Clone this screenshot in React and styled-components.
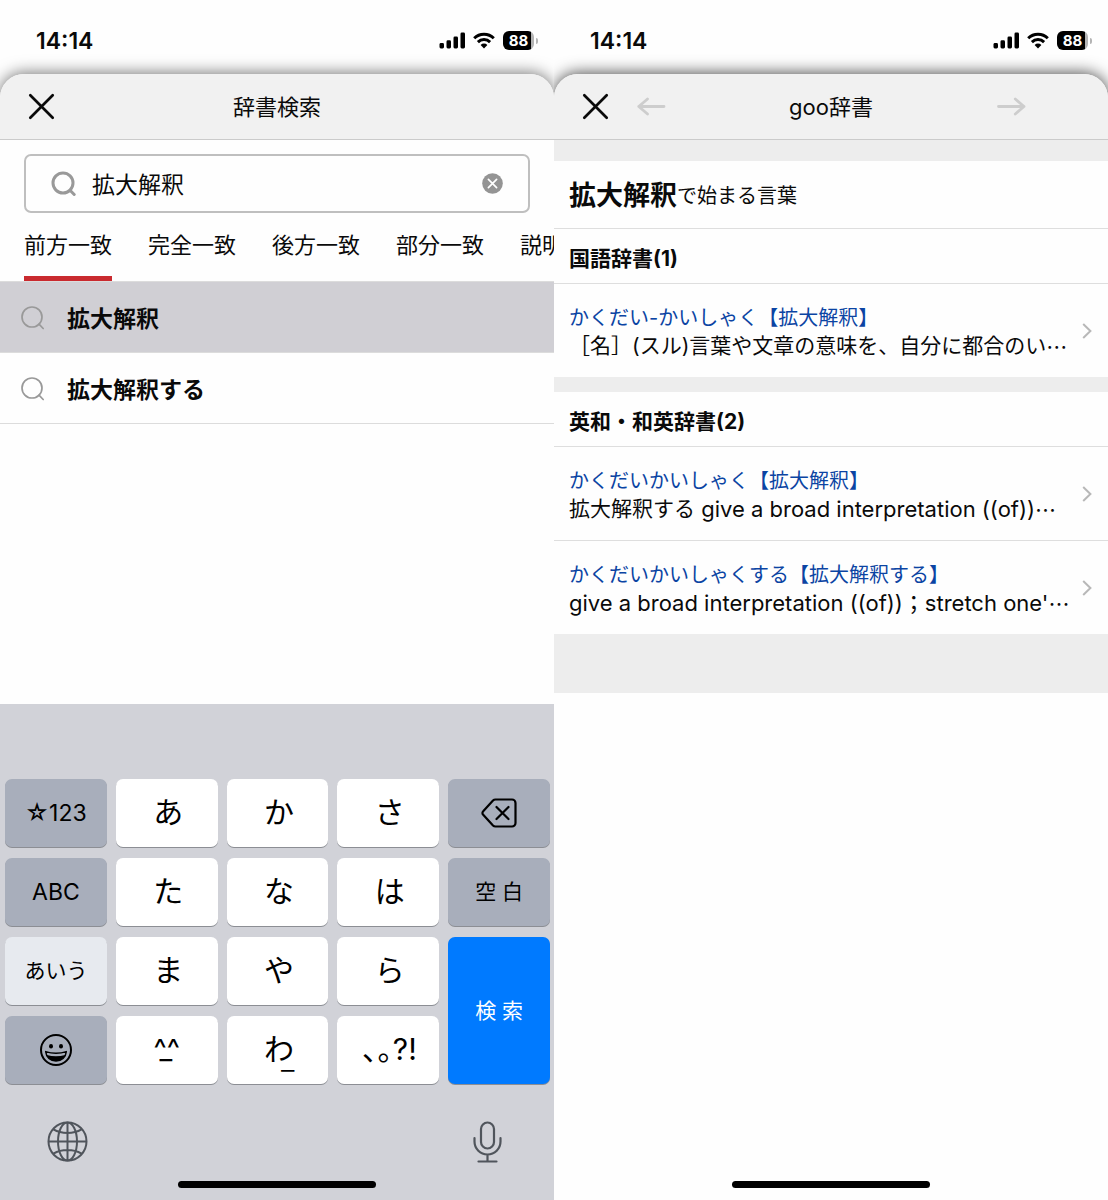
import React, { useState } from "react";
import styled, { createGlobalStyle } from "styled-components";

const GlobalStyle = createGlobalStyle`
  * {
    box-sizing: border-box;
  }

  body {
    margin: 0;
    background-color: #fefefe;
    color: #0a0a0a;
    font-family: "Inter", "Noto Sans CJK JP", sans-serif;
  }

  h1, h2, p, ul {
    margin: 0;
    padding: 0;
  }

  ul {
    list-style: none;
  }

  button, input {
    margin: 0;
    padding: 0;
    border: 0;
    background: none;
    color: inherit;
    font: inherit;
  }

  button {
    cursor: pointer;
  }

  svg {
    display: block;
  }
`;

const Screens = styled.main`
  display: grid;
  grid-template-columns: 1fr 1fr;
  min-height: 100vh;
`;

const Screen = styled.section`
  display: flex;
  flex-direction: column;
  min-width: 0;
  overflow: hidden;
`;

const StatusBar = styled.div`
  display: flex;
  align-items: center;
  justify-content: space-between;
  height: 74px;
  padding: 7px 16px 0 36px;
`;

const Time = styled.span`
  font-size: 23px;
  font-weight: 600;
`;

const StatusIcons = styled.div`
  display: flex;
  align-items: center;
  gap: 8px;
`;

const Battery = styled.div`
  display: flex;
  align-items: center;
  gap: 2px;
`;

const BatteryBody = styled.span`
  width: 31px;
  height: 19px;
  border-radius: 6px;
  background: linear-gradient(to right, #000 28px, #b4b4b4 28px);
  color: #ffffff;
  font-size: 15px;
  font-weight: 700;
  line-height: 19px;
  text-align: center;
`;

const BatteryCap = styled.span`
  width: 2px;
  height: 6px;
  border-radius: 0 2px 2px 0;
  background-color: #b4b4b4;
`;

const Sheet = styled.div`
  display: flex;
  flex: 1;
  flex-direction: column;
  border-radius: 24px 24px 0 0;
  background-color: #fefefe;
  box-shadow: 0 -1px 16px rgba(0, 0, 0, ${(props) => props.$shade});
`;

const Header = styled.header`
  display: grid;
  grid-template-columns: 1fr auto 1fr;
  align-items: center;
  height: 66px;
  border-bottom: 1px solid #cbcbcb;
  border-radius: 24px 24px 0 0;
  background-color: #f1f1f1;
`;

const HeaderLeft = styled.div`
  display: flex;
  align-items: center;
  gap: 28px;
  padding-left: 28px;
`;

const HeaderRight = styled.div`
  display: flex;
  justify-content: flex-end;
  padding-right: 82px;
`;

const Title = styled.h1`
  font-size: 22px;
  font-weight: 400;
  line-height: 32px;
`;

const SearchBox = styled.form`
  display: flex;
  align-items: center;
  height: 59px;
  margin: 14px 24px 0;
  padding: 0 25px;
  border: 2px solid #bfbfbf;
  border-radius: 7px;
`;

const SearchInput = styled.input`
  flex: 1;
  min-width: 0;
  padding: 2px 16px 0;
  font-size: 23px;
  line-height: 36px;
  outline: none;
`;

const Tabs = styled.div`
  display: flex;
  gap: 36px;
  padding-left: 24px;
  border-bottom: 1px solid #dcdcdc;
  overflow: hidden;
`;

const Tab = styled.button`
  flex: none;
  height: 68px;
  border-bottom: 5px solid ${(props) => (props.$active ? "#c92a2f" : "transparent")};
  font-size: 22px;
  line-height: 32px;
  white-space: nowrap;
`;

const Suggestion = styled.button`
  display: flex;
  align-items: center;
  gap: 22px;
  width: 100%;
  height: 71px;
  padding-left: 20px;
  border-bottom: 1px solid #dcdcdc;
  background-color: ${(props) => (props.$active ? "#d0cfd4" : "transparent")};
  font-size: 23px;
  font-weight: 700;
`;

const Keyboard = styled.div`
  margin-top: auto;
  padding-top: 75px;
  background-color: #d1d2d8;
`;

const Keys = styled.div`
  display: grid;
  grid-template-columns: repeat(5, 1fr);
  grid-auto-rows: 68px;
  gap: 11px 9px;
  padding: 0 4px 0 5px;
`;

const keyColors = {
  kana: "#ffffff",
  dark: "#a8aebb",
  light: "#e7eaef",
  blue: "#007aff"
};

const keySizes = {
  kana: "30px",
  dark: "23px",
  light: "21px",
  blue: "21px"
};

const Key = styled.button`
  display: flex;
  align-items: center;
  justify-content: center;
  grid-row: span ${(props) => props.$rows || 1};
  padding: ${(props) => (props.$kind === "kana" ? "0 0 2px 3px" : "0")};
  border-radius: 7px;
  background-color: ${(props) => keyColors[props.$kind]};
  box-shadow: 0 1px 0 #8c8e94;
  color: ${(props) => (props.$kind === "blue" ? "#ffffff" : "#000000")};
  font-size: ${(props) => keySizes[props.$kind]};
  line-height: 44px;
  white-space: nowrap;
`;

const SmallLabel = styled.span`
  font-size: 21px;
`;

const Face = styled.span`
  position: relative;
  padding-right: 3px;
  font-size: 28px;
`;

const FaceMouth = styled.span`
  position: absolute;
  top: 0;
  left: 6px;
`;

const Wa = styled.span`
  position: relative;
`;

const WaBar = styled.span`
  position: absolute;
  top: 10px;
  left: 17px;
  font-weight: 300;
`;

const KeyboardFooter = styled.div`
  display: flex;
  align-items: center;
  justify-content: space-between;
  height: 79px;
  margin-top: 18px;
  padding: 0 52px 0 47px;
  color: #50555c;
`;

const HomeBar = styled.div`
  width: 198px;
  height: 7px;
  margin: 0 auto 12px;
  border-radius: 4px;
  background-color: #000000;
`;

const ResultPage = styled.div`
  padding: 21px 0 59px;
  background-color: #ededed;
`;

const PageTitle = styled.h2`
  display: flex;
  align-items: center;
  height: 68px;
  padding: 2px 0 0 15px;
  border-bottom: 1px solid #dedede;
  background-color: #fefefe;
  font-size: 20px;
  font-weight: 400;
  line-height: 40px;

  strong {
    font-size: 27px;
    font-weight: 700;
  }
`;

const Dictionary = styled.section`
  background-color: #fefefe;

  & + & {
    margin-top: 15px;
  }
`;

const DictionaryName = styled.h2`
  height: 55px;
  padding: 15px 0 0 15px;
  border-bottom: 1px solid #dedede;
  font-size: 21px;
  font-weight: 700;
  line-height: 30px;
`;

const Entry = styled.a`
  display: flex;
  align-items: center;
  justify-content: space-between;
  height: 93px;
  padding: 0 16px 0 15px;
  color: inherit;
  text-decoration: none;
  white-space: nowrap;

  li + li & {
    height: 94px;
    border-top: 1px solid #dedede;
  }
`;

const EntryText = styled.div`
  padding-top: 2px;
`;

const Word = styled.p`
  color: #0b44a3;
  font-size: 20px;
  line-height: 28px;
`;

const Meaning = styled.p`
  display: flex;
  align-items: center;
  height: 28px;
  font-size: 21px;
  line-height: 28px;
`;

const English = styled.span`
  font-size: 22px;
  white-space: pre;
`;

const Ellipsis = styled.span`
  font-family: "Noto Sans CJK JP", sans-serif;
`;

const Footer = styled.footer`
  margin-top: auto;
`;

const CloseIcon = () => (
  <svg width="27" height="27" viewBox="0 0 27 27" fill="none" stroke="#0a0a0a" strokeWidth="2.7" strokeLinecap="round">
    <path d="M2.3 2.3l22.4 22.4M24.7 2.3L2.3 24.7" />
  </svg>
);

const BackIcon = () => (
  <svg width="30" height="20" viewBox="0 0 30 20" fill="none" stroke="#cdcdcd" strokeWidth="2.8" strokeLinecap="round" strokeLinejoin="round">
    <path d="M27 9.5H1.8M10.5 2L1.8 9.5l8.7 7.5" />
  </svg>
);

const ForwardIcon = () => (
  <svg width="30" height="20" viewBox="0 0 30 20" fill="none" stroke="#cdcdcd" strokeWidth="2.8" strokeLinecap="round" strokeLinejoin="round">
    <path d="M2.5 9.5H28M19.3 2L28 9.5l-8.7 7.5" />
  </svg>
);

const SearchIcon = ({ stroke }) => (
  <svg width="25" height="25" viewBox="0 0 25 25" fill="none" stroke="#999999" strokeWidth={stroke} strokeLinecap="round">
    <circle cx="12" cy="12" r="10" />
    <path d="M19 19.2l4.2 4.3" />
  </svg>
);

const ClearIcon = () => (
  <svg width="21" height="21" viewBox="0 0 21 21">
    <circle cx="10.5" cy="10.5" r="10.3" fill="#949494" />
    <path d="M6.4 6.4l8.2 8.2M14.6 6.4l-8.2 8.2" stroke="#fff" strokeWidth="1.7" strokeLinecap="round" />
  </svg>
);

const ChevronIcon = () => (
  <svg width="10" height="16" viewBox="0 0 10 16" fill="none" stroke="#b8b8b8" strokeWidth="2">
    <path d="M1.2 1L8.4 8l-7.2 7" />
  </svg>
);

const SignalIcon = () => (
  <svg width="26" height="17" viewBox="0 0 26 17">
    <rect x="0.5" y="11" width="4.5" height="5.5" rx="1.4" />
    <rect x="7.5" y="8.3" width="4.5" height="8.2" rx="1.4" />
    <rect x="14.5" y="4.5" width="4.5" height="12" rx="1.4" />
    <rect x="21.5" y="0.5" width="4.5" height="16" rx="1.4" />
  </svg>
);

const WifiIcon = () => (
  <svg width="22" height="17" viewBox="0 0 22 17" fill="none" stroke="#000" strokeWidth="3">
    <path d="M1.2 6.2a14 14 0 0 1 19.6 0" />
    <path d="M4.9 10.1a8.7 8.7 0 0 1 12.2 0" />
    <path d="M11 16.4l-3.4-3.5a4.9 4.9 0 0 1 6.8 0z" fill="#000" stroke="none" />
  </svg>
);

const DeleteIcon = () => (
  <svg width="36" height="30" viewBox="0 0 36 30" fill="none" stroke="#000" strokeWidth="2.2" strokeLinecap="round" strokeLinejoin="round">
    <path d="M14.5 1.5H31a3.5 3.5 0 0 1 3.5 3.5v20a3.5 3.5 0 0 1-3.5 3.5H14.5a3.5 3.5 0 0 1-2.5-1L2.2 16.8a2.5 2.5 0 0 1 0-3.6L12 2.5a3.5 3.5 0 0 1 2.5-1z" />
    <path d="M15.5 9l12 12M27.5 9l-12 12" />
  </svg>
);

const EmojiIcon = () => (
  <svg width="34" height="34" viewBox="0 0 34 34" fill="none" stroke="#000" strokeWidth="2">
    <circle cx="17" cy="17" r="15" />
    <ellipse cx="12" cy="13.3" rx="2" ry="2.3" fill="#000" stroke="none" />
    <ellipse cx="22" cy="13.3" rx="2" ry="2.3" fill="#000" stroke="none" />
    <path d="M6.7 18.6c6.500 2 14.100 2 20.600 0-.6 5.800-4.600 9.300-10.300 9.300s-9.700-3.500-10.300-9.300z" strokeWidth="1.5" strokeLinejoin="round" />
    <path d="M7.8 21.9c6 1.900 12.400 1.900 18.400 0-1.400 3.700-4.600 6-9.200 6s-7.800-2.300-9.200-6z" fill="#000" stroke="none" />
  </svg>
);

const GlobeIcon = () => (
  <svg width="41" height="41" viewBox="0 0 41 41" fill="none" stroke="currentColor" strokeWidth="2">
    <circle cx="20.5" cy="20.5" r="19" />
    <ellipse cx="20.5" cy="20.5" rx="9.5" ry="19" />
    <path d="M20.5 1.5v38M1.5 20.5h38M6.5 8.3c8 4.8 20 4.8 28 0M6.5 32.7c8-4.8 20-4.8 28 0" />
  </svg>
);

const MicIcon = () => (
  <svg width="29" height="42" viewBox="0 0 29 42" fill="none" stroke="currentColor" strokeWidth="2.2" strokeLinecap="round">
    <rect x="8" y="1.5" width="13" height="26" rx="6.5" />
    <path d="M1.5 17v3.5a13 13 0 0 0 26 0V17M14.5 33.5v7M5.5 40.5h18" />
  </svg>
);

const Status = () => (
  <StatusBar>
    <Time>14:14</Time>
    <StatusIcons>
      <SignalIcon />
      <WifiIcon />
      <Battery>
        <BatteryBody>88</BatteryBody>
        <BatteryCap />
      </Battery>
    </StatusIcons>
  </StatusBar>
);

const tabs = ["前方一致", "完全一致", "後方一致", "部分一致", "説明文"];

const suggestions = ["拡大解釈", "拡大解釈する"];

const keys = [
  { label: "☆123", kind: "dark" },
  { label: "あ", kind: "kana" },
  { label: "か", kind: "kana" },
  { label: "さ", kind: "kana" },
  { label: <DeleteIcon />, kind: "dark", name: "削除" },
  { label: "ABC", kind: "dark" },
  { label: "た", kind: "kana" },
  { label: "な", kind: "kana" },
  { label: "は", kind: "kana" },
  { label: <SmallLabel>空 白</SmallLabel>, kind: "dark" },
  { label: "あいう", kind: "light" },
  { label: "ま", kind: "kana" },
  { label: "や", kind: "kana" },
  { label: "ら", kind: "kana" },
  { label: "検 索", kind: "blue", rows: 2 },
  { label: <EmojiIcon />, kind: "dark", name: "絵文字" },
  {
    label: (
      <Face>
        ^^<FaceMouth>_</FaceMouth>
      </Face>
    ),
    kind: "kana",
    name: "顔文字"
  },
  {
    label: (
      <Wa>
        わ<WaBar>_</WaBar>
      </Wa>
    ),
    kind: "kana"
  },
  { label: "､｡?!", kind: "kana" }
];

const dictionaries = [
  {
    name: "国語辞書(1)",
    entries: [
      {
        word: "かくだい-かいしゃく【拡大解釈】",
        meaning: "［名］(スル)言葉や文章の意味を、自分に都合のい"
      }
    ]
  },
  {
    name: "英和・和英辞書(2)",
    entries: [
      {
        word: "かくだいかいしゃく【拡大解釈】",
        meaning: (
          <>
            拡大解釈する<English> give a broad interpretation ((of))</English>
          </>
        )
      },
      {
        word: "かくだいかいしゃくする【拡大解釈する】",
        meaning: <English>give a broad interpretation ((of))；stretch one'</English>
      }
    ]
  }
];

const SearchScreen = () => {
  const [term, setTerm] = useState("拡大解釈");
  const [tab, setTab] = useState(0);

  return (
    <Screen>
      <Status />
      <Sheet $shade={0.55}>
        <Header>
          <HeaderLeft>
            <button type="button" aria-label="閉じる">
              <CloseIcon />
            </button>
          </HeaderLeft>
          <Title>辞書検索</Title>
        </Header>
        <SearchBox onSubmit={(e) => e.preventDefault()}>
          <SearchIcon stroke="3" />
          <SearchInput
            type="text"
            aria-label="検索語"
            value={term}
            onChange={(e) => setTerm(e.target.value)}
          />
          <button type="button" aria-label="消去" onClick={() => setTerm("")}>
            <ClearIcon />
          </button>
        </SearchBox>
        <Tabs>
          {tabs.map((name, i) => (
            <Tab key={name} type="button" $active={i === tab} onClick={() => setTab(i)}>
              {name}
            </Tab>
          ))}
        </Tabs>
        <ul>
          {suggestions.map((word, i) => (
            <li key={word}>
              <Suggestion type="button" $active={i === 0}>
                <SearchIcon stroke="1.7" />
                {word}
              </Suggestion>
            </li>
          ))}
        </ul>
        <Keyboard>
          <Keys>
            {keys.map((key, i) => (
              <Key key={i} type="button" $kind={key.kind} $rows={key.rows} aria-label={key.name}>
                {key.label}
              </Key>
            ))}
          </Keys>
          <KeyboardFooter>
            <button type="button" aria-label="キーボード切替">
              <GlobeIcon />
            </button>
            <button type="button" aria-label="音声入力">
              <MicIcon />
            </button>
          </KeyboardFooter>
          <HomeBar />
        </Keyboard>
      </Sheet>
    </Screen>
  );
};

const ResultScreen = () => (
  <Screen>
    <Status />
    <Sheet $shade={0.7}>
      <Header>
        <HeaderLeft>
          <button type="button" aria-label="閉じる">
            <CloseIcon />
          </button>
          <button type="button" aria-label="戻る">
            <BackIcon />
          </button>
        </HeaderLeft>
        <Title>goo辞書</Title>
        <HeaderRight>
          <button type="button" aria-label="進む">
            <ForwardIcon />
          </button>
        </HeaderRight>
      </Header>
      <ResultPage>
        <PageTitle>
          <strong>拡大解釈</strong>で始まる言葉
        </PageTitle>
        {dictionaries.map((dictionary) => (
          <Dictionary key={dictionary.name}>
            <DictionaryName>{dictionary.name}</DictionaryName>
            <ul>
              {dictionary.entries.map((entry) => (
                <li key={entry.word}>
                  <Entry href="#">
                    <EntryText>
                      <Word>{entry.word}</Word>
                      <Meaning>
                        {entry.meaning}
                        <Ellipsis>…</Ellipsis>
                      </Meaning>
                    </EntryText>
                    <ChevronIcon />
                  </Entry>
                </li>
              ))}
            </ul>
          </Dictionary>
        ))}
      </ResultPage>
      <Footer>
        <HomeBar />
      </Footer>
    </Sheet>
  </Screen>
);

export default () => (
  <>
    <GlobalStyle />
    <Screens lang="ja">
      <SearchScreen />
      <ResultScreen />
    </Screens>
  </>
);
